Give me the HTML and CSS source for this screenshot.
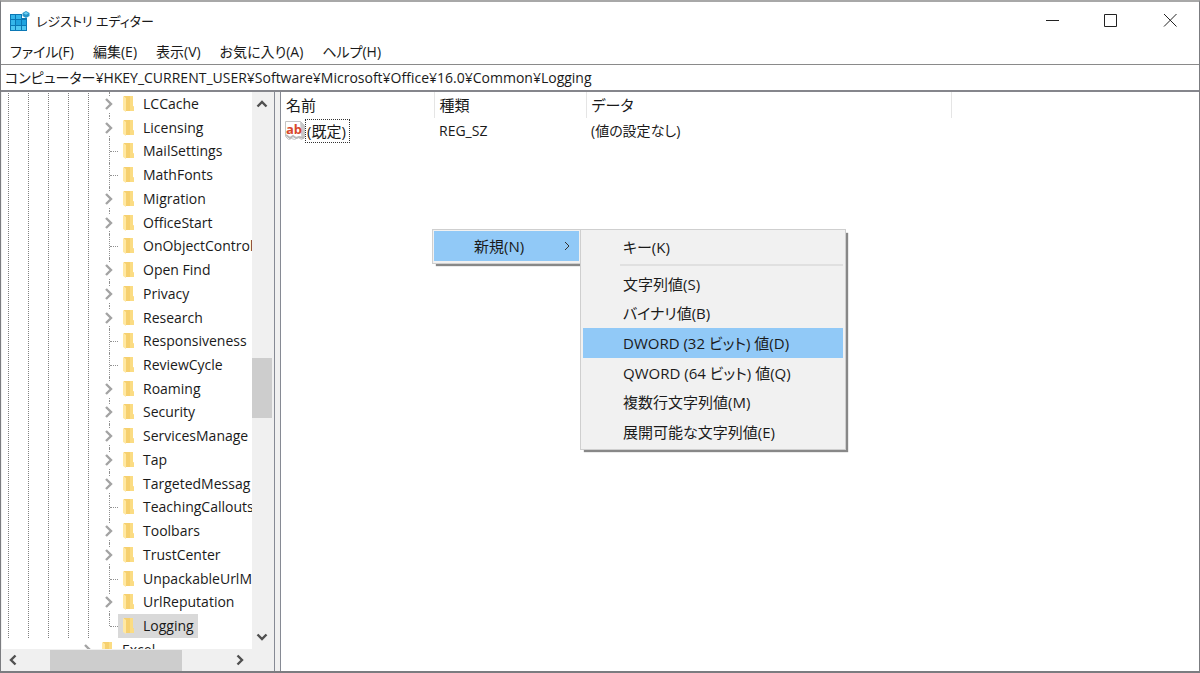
FILE: index.html
```html
<!DOCTYPE html>
<html lang="ja">
<head>
<meta charset="utf-8">
<title>レジストリ エディター</title>
<link rel="stylesheet" href="styles.css">
</head>
<body>
<svg class="defs" aria-hidden="true">
  <symbol id="folder" viewBox="0 0 14 18">
    <path d="M2 1h9v10l1 1v4H3z" fill="#f6d06f"/>
    <path d="M8 1h3v10l1 1v4H8z" fill="#fbdc83"/>
    <path d="M1 1l3 2v14l-3-2z" fill="#ffe8a3"/>
  </symbol>
  <symbol id="chevron" viewBox="0 0 10 12">
    <path d="M2 1l5 5-5 5" fill="none" stroke="#a3a3a3" stroke-width="2.4"/>
  </symbol>
  <symbol id="arrow" viewBox="0 0 12 12">
    <path d="M1.500 8.500L6 4l4.500 4.500" fill="none" stroke="#505050" stroke-width="2.4"/>
  </symbol>
</svg>
<div class="window">
  <header class="titlebar">
    <svg class="app-icon" viewBox="0 0 20 20" aria-hidden="true">
      <path d="M0 3h12v4h5v13H0z" fill="#0b78b5"/>
      <g fill="#35b6ea">
        <path d="M1 4h4v4H1zM6 4h5v4H6zM1 9h4v5H1z"/>
        <path d="M6 9h5v5H6zM12 9h4v5h-4z" fill="#1fa3df"/>
        <path d="M1 15h4v4H1zM6 15h5v4H6zM12 15h4v4h-4z" fill="#4fc7f1"/>
      </g>
      <path d="M16 0l3.500 2v3L16 7l-3.500-2V2z" fill="#2795c9"/>
      <path d="M16 1l2.500 1.300L16 3.800l-2.500-1.500z" fill="#6fd0f3"/>
    </svg>
    <h1 class="title">レジストリ エディター</h1>
    <button class="caption" aria-label="最小化"><svg viewBox="0 0 14 14"><path d="M1 6.500h13" stroke="#222" fill="none"/></svg></button>
    <button class="caption" aria-label="最大化"><svg viewBox="0 0 14 14"><path d="M.5 .5h12v12h-12z" stroke="#222" fill="none"/></svg></button>
    <button class="caption" aria-label="閉じる"><svg viewBox="0 0 14 14"><path d="M1 0l12.500 12.500M13.500 0L1 12.500" stroke="#222" fill="none"/></svg></button>
  </header>
  <nav class="menubar">
    <button>ファイル(F)</button>
    <button>編集(E)</button>
    <button>表示(V)</button>
    <button>お気に入り(A)</button>
    <button>ヘルプ(H)</button>
  </nav>
  <input class="address" type="text" aria-label="アドレス" value="コンピューター¥HKEY_CURRENT_USER¥Software¥Microsoft¥Office¥16.0¥Common¥Logging">
  <main class="panes">
    <section class="tree-pane">
      <ul class="tree">
        <li class="node parent"><svg class="chev"><use href="#chevron"/></svg><span class="key"><svg class="folder"><use href="#folder"/></svg>LCCache</span></li>
        <li class="node parent"><svg class="chev"><use href="#chevron"/></svg><span class="key"><svg class="folder"><use href="#folder"/></svg>Licensing</span></li>
        <li class="node leaf"><span class="key"><svg class="folder"><use href="#folder"/></svg>MailSettings</span></li>
        <li class="node leaf"><span class="key"><svg class="folder"><use href="#folder"/></svg>MathFonts</span></li>
        <li class="node parent"><svg class="chev"><use href="#chevron"/></svg><span class="key"><svg class="folder"><use href="#folder"/></svg>Migration</span></li>
        <li class="node parent"><svg class="chev"><use href="#chevron"/></svg><span class="key"><svg class="folder"><use href="#folder"/></svg>OfficeStart</span></li>
        <li class="node leaf"><span class="key"><svg class="folder"><use href="#folder"/></svg>OnObjectControl</span></li>
        <li class="node parent"><svg class="chev"><use href="#chevron"/></svg><span class="key"><svg class="folder"><use href="#folder"/></svg>Open Find</span></li>
        <li class="node parent"><svg class="chev"><use href="#chevron"/></svg><span class="key"><svg class="folder"><use href="#folder"/></svg>Privacy</span></li>
        <li class="node parent"><svg class="chev"><use href="#chevron"/></svg><span class="key"><svg class="folder"><use href="#folder"/></svg>Research</span></li>
        <li class="node leaf"><span class="key"><svg class="folder"><use href="#folder"/></svg>Responsiveness</span></li>
        <li class="node leaf"><span class="key"><svg class="folder"><use href="#folder"/></svg>ReviewCycle</span></li>
        <li class="node parent"><svg class="chev"><use href="#chevron"/></svg><span class="key"><svg class="folder"><use href="#folder"/></svg>Roaming</span></li>
        <li class="node parent"><svg class="chev"><use href="#chevron"/></svg><span class="key"><svg class="folder"><use href="#folder"/></svg>Security</span></li>
        <li class="node parent"><svg class="chev"><use href="#chevron"/></svg><span class="key"><svg class="folder"><use href="#folder"/></svg>ServicesManage</span></li>
        <li class="node parent"><svg class="chev"><use href="#chevron"/></svg><span class="key"><svg class="folder"><use href="#folder"/></svg>Tap</span></li>
        <li class="node parent"><svg class="chev"><use href="#chevron"/></svg><span class="key"><svg class="folder"><use href="#folder"/></svg>TargetedMessag</span></li>
        <li class="node leaf"><span class="key"><svg class="folder"><use href="#folder"/></svg>TeachingCallouts</span></li>
        <li class="node parent"><svg class="chev"><use href="#chevron"/></svg><span class="key"><svg class="folder"><use href="#folder"/></svg>Toolbars</span></li>
        <li class="node parent"><svg class="chev"><use href="#chevron"/></svg><span class="key"><svg class="folder"><use href="#folder"/></svg>TrustCenter</span></li>
        <li class="node leaf"><span class="key"><svg class="folder"><use href="#folder"/></svg>UnpackableUrlM</span></li>
        <li class="node parent"><svg class="chev"><use href="#chevron"/></svg><span class="key"><svg class="folder"><use href="#folder"/></svg>UrlReputation</span></li>
        <li class="node leaf last"><span class="key selected"><svg class="folder"><use href="#folder"/></svg>Logging</span></li>
        <li class="node outer"><svg class="chev"><use href="#chevron"/></svg><span class="key"><svg class="folder"><use href="#folder"/></svg>Excel</span></li>
      </ul>
      <div class="vscroll">
        <button aria-label="上へ"><svg><use href="#arrow"/></svg></button>
        <div class="vtrack"><div class="vthumb"></div></div>
        <button class="down" aria-label="下へ"><svg><use href="#arrow"/></svg></button>
      </div>
      <div class="hscroll">
        <button class="left" aria-label="左へ"><svg><use href="#arrow"/></svg></button>
        <div class="htrack"><div class="hthumb"></div></div>
        <button class="right" aria-label="右へ"><svg><use href="#arrow"/></svg></button>
      </div>
    </section>
    <section class="list-pane">
      <table class="values">
        <colgroup><col class="c-name"><col class="c-type"><col class="c-data"><col></colgroup>
        <thead><tr><th>名前</th><th>種類</th><th>データ</th><th></th></tr></thead>
        <tbody><tr>
          <td class="name"><div class="name-box">
            <svg class="ab" viewBox="0 0 20 20" aria-hidden="true">
              <path d="M.5 .5h15l4 4v12l-3 2-3-2-4 2-3-1-3 1-3-3z" fill="#fff" stroke="#c4c4c4"/>
              <path d="M15 .5l4.500 4v12l-3 1z" fill="#c9c9c9"/>
              <path d="M1 14l4 3 3-2 3 2 3-1 5 1" fill="none" stroke="#b9b9b9" stroke-width="2"/>
              <text x="1" y="13" class="ab-text">ab</text>
            </svg><span class="focused">(既定)</span></div></td>
          <td>REG_SZ</td><td>(値の設定なし)</td><td></td>
        </tr></tbody>
      </table>
      <div class="menu context">
        <button class="item hot">新規(N)<svg viewBox="0 0 8 10"><path d="M2 1l4 4-4 4" fill="none" stroke="#333"/></svg></button>
      </div>
      <div class="menu submenu">
        <button class="item">キー(K)</button>
        <hr>
        <div class="group">
          <button class="item">文字列値(S)</button>
          <button class="item">バイナリ値(B)</button>
          <button class="item hot">DWORD (32 ビット) 値(D)</button>
          <button class="item">QWORD (64 ビット) 値(Q)</button>
          <button class="item">複数行文字列値(M)</button>
          <button class="item">展開可能な文字列値(E)</button>
        </div>
      </div>
    </section>
  </main>
</div>
</body>
</html>
```
FILE: styles.css
```css
* { box-sizing: border-box; }
body, h1, ul { margin: 0; padding: 0; }
body {
  font: 14px/20px "Open Sans", "Noto Sans CJK JP", sans-serif;
  font-feature-settings: "palt";
  color: #1a1a1a;
}
button, input {
  font: inherit;
  font-feature-settings: inherit;
  color: inherit;
  background: none;
  border: 0;
  padding: 0;
  margin: 0;
}
svg { display: block; flex: none; }
.defs { position: absolute; width: 0; height: 0; }

.window {
  display: flex;
  flex-direction: column;
  min-height: 100vh;
  background: #fff;
  border: 1px solid #7b7c80;
  border-top: 2px solid #a8a8a8;
  border-bottom-width: 2px;
}
.titlebar { display: flex; align-items: center; height: 38px; padding-left: 9px; }
.app-icon { width: 20px; height: 20px; }
.title { flex: 1; padding-left: 6px; font-size: 13px; font-weight: 400; }
.caption { display: flex; align-items: center; justify-content: center; width: 59px; height: 36px; }
.caption svg { width: 14px; height: 14px; }

.menubar { display: flex; gap: 19px; height: 24px; padding-left: 9px; align-items: center; }
.address {
  height: 28px;
  width: 100%;
  padding: 0 4px 2px;
  border-top: 1px solid #8a8a8a;
  border-bottom: 2px solid #85868c;
}

.panes { display: flex; flex: 1; background: #f0f0f0; }
.tree-pane {
  display: grid;
  grid-template: 1fr 22px / 1fr 20px;
  width: 274px;
  padding: 0 2px 0 1px;
  border-right: 1px solid #868a94;
}
.tree {
  display: grid;
  grid-template-rows: repeat(23, 1fr) 11px;
  overflow: hidden;
  list-style: none;
  background:
    repeating-linear-gradient(to bottom, #fff 0 1px, transparent 1px 2px),
    repeating-linear-gradient(to right, transparent 0 6px, #808080 6px 7px, transparent 7px 20px) 0 0 / 100px 100% no-repeat #fff;
}
.node {
  position: relative;
  display: flex;
  align-items: center;
  padding-left: 116px;
  min-height: 0;
  white-space: nowrap;
}
.node::before {
  content: "";
  position: absolute;
  left: 107px;
  top: 0;
  bottom: 0;
  border-left: 1px dotted #909090;
}
.leaf::after {
  content: "";
  position: absolute;
  left: 108px;
  top: 50%;
  width: 8px;
  border-top: 1px dotted #909090;
}
.last::before { bottom: 50%; }
.chev {
  position: relative;
  width: 10px;
  height: 16px;
  padding: 2px 0;
  margin: 0 6px 0 -14px;
  background: #fff;
}
.chev + .key { margin-left: -2px; }
.key { display: flex; align-items: center; height: 100%; padding: 0 4px; gap: 7px; }
.folder { width: 14px; height: 18px; }
.selected { background: #d9d9d9; }
.outer { height: 24px; padding-left: 95px; background: #fff; }
.outer::before { display: none; }

.vscroll { display: flex; flex-direction: column; }
.vscroll button, .hscroll button { display: flex; align-items: center; justify-content: center; width: 20px; height: 24px; }
.hscroll button { width: 22px; }
.vscroll svg, .hscroll svg { width: 12px; height: 12px; }
.vtrack { flex: 1; padding-top: 242px; }
.vthumb { height: 60px; background: #cdcdcd; }
.down svg { transform: rotate(180deg); }
.left svg { transform: rotate(270deg); }
.right svg { transform: rotate(90deg); }
.hscroll { display: flex; align-items: center; padding-right: 1px; }
.htrack { flex: 1; padding-left: 26px; }
.hthumb { width: 132px; height: 21px; background: #cdcdcd; }

.list-pane { position: relative; flex: 1; margin-left: 5px; background: #fff; border-left: 1px solid #868a94; }
.values { width: 100%; table-layout: fixed; border-collapse: collapse; }
.c-name { width: 153px; }
.c-type { width: 152px; }
.c-data { width: 365px; }
th, td { height: 26px; padding: 0 5px; text-align: left; font-weight: 400; }
th { border-right: 1px solid #e5e5e5; font-size: 15px; }
th:last-child { border: 0; }
td.name { padding-left: 4px; font-size: 15px; }
.name-box { display: flex; align-items: center; }
.ab { width: 20px; height: 20px; }
.ab-text { font: 700 13px "Open Sans", sans-serif; fill: #d8472b; }
.focused { padding: 1px 3px 1px 1px; border: 1px dotted #333; }

.menu {
  position: absolute;
  padding: 2px;
  font-size: 15px;
  background: #f1f1f1;
  border: 1px solid #cfcfcf;
  box-shadow: 3px 3px 1px -1px #888;
}
.context { left: 151px; top: 137px; width: 149px; padding: 1px 1px 2px; }
.submenu { left: 299px; top: 137px; width: 266px; }
.item { display: flex; align-items: center; width: 100%; height: 30px; padding-left: 40px; white-space: nowrap; }
.item svg { width: 8px; height: 10px; margin: 0 8px 0 auto; }
.hot { background: #91c9f7; }
.menu hr { height: 2px; margin: 2px 0 3px 37px; border: 0; background: #e0e0e0; }
.group { display: grid; grid-auto-rows: 1fr; height: 178px; }
.group .item { height: auto; }
```
